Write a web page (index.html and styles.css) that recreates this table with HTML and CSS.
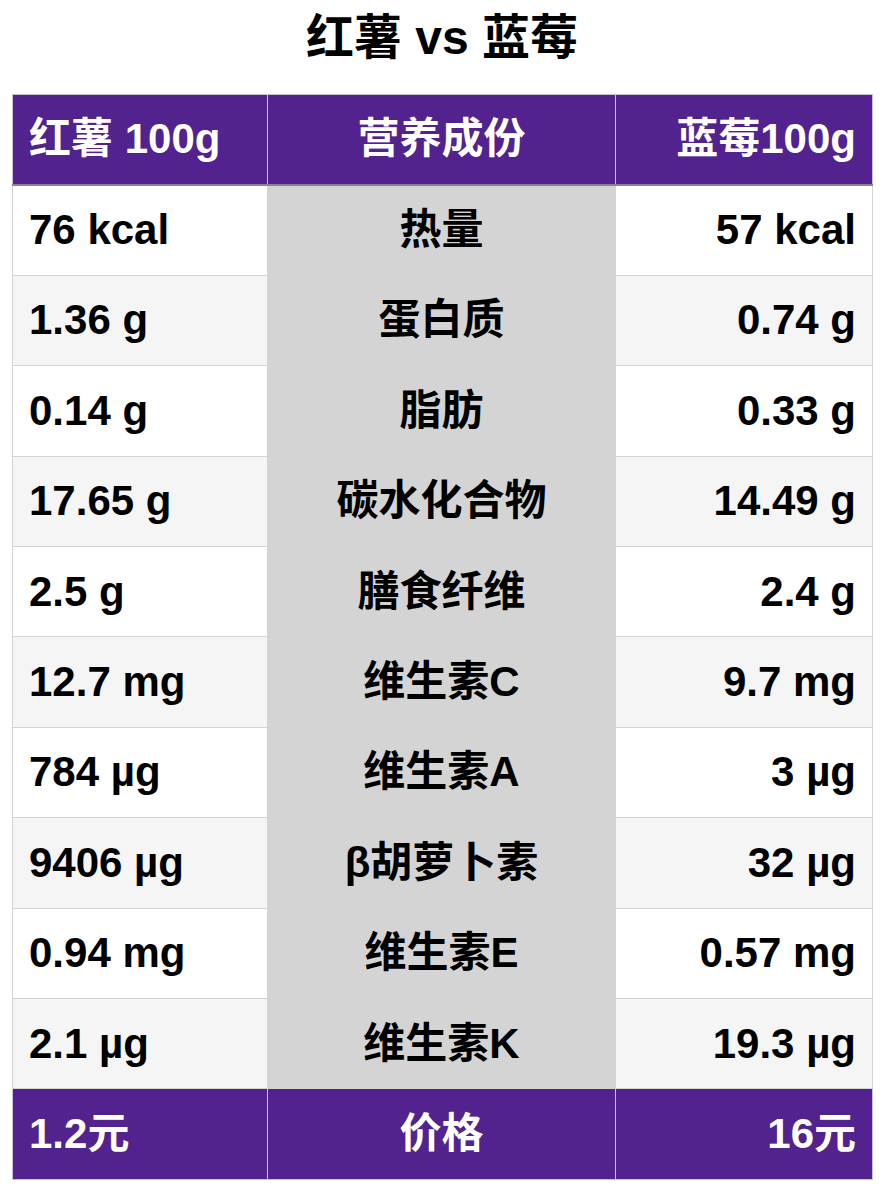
FILE: index.html
```html
<!DOCTYPE html>
<html lang="zh">
<head>
<meta charset="utf-8">
<title>红薯 vs 蓝莓</title>
<link rel="stylesheet" href="styles.css">
</head>
<body>
<h1 class="title">红薯 vs 蓝莓</h1>
<table class="cmp">
  <thead>
    <tr class="head">
      <th class="l">红薯 100g</th>
      <th class="c">营养成份</th>
      <th class="r">蓝莓100g</th>
    </tr>
  </thead>
  <tbody>
    <tr><td class="l">76 kcal</td><td class="c">热量</td><td class="r">57 kcal</td></tr>
    <tr><td class="l">1.36 g</td><td class="c">蛋白质</td><td class="r">0.74 g</td></tr>
    <tr><td class="l">0.14 g</td><td class="c">脂肪</td><td class="r">0.33 g</td></tr>
    <tr><td class="l">17.65 g</td><td class="c">碳水化合物</td><td class="r">14.49 g</td></tr>
    <tr><td class="l">2.5 g</td><td class="c">膳食纤维</td><td class="r">2.4 g</td></tr>
    <tr><td class="l">12.7 mg</td><td class="c">维生素C</td><td class="r">9.7 mg</td></tr>
    <tr><td class="l">784 µg</td><td class="c">维生素A</td><td class="r">3 µg</td></tr>
    <tr><td class="l">9406 µg</td><td class="c">β胡萝卜素</td><td class="r">32 µg</td></tr>
    <tr><td class="l">0.94 mg</td><td class="c">维生素E</td><td class="r">0.57 mg</td></tr>
    <tr><td class="l">2.1 µg</td><td class="c">维生素K</td><td class="r">19.3 µg</td></tr>
  </tbody>
  <tfoot>
    <tr class="foot">
      <td class="l">1.2元</td>
      <td class="c">价格</td>
      <td class="r">16元</td>
    </tr>
  </tfoot>
</table>
</body>
</html>
```
FILE: styles.css
```css
html, body {
  margin: 0;
  padding: 0;
  background: #ffffff;
}
body {
  font-family: "Liberation Sans", "Noto Sans CJK SC", sans-serif;
  font-weight: bold;
  color: #000;
}
.title {
  margin: 0;
  height: 94px;
  padding-top: 9px;
  box-sizing: border-box;
  text-align: center;
  font-size: 48px;
  line-height: 58px;
  font-weight: bold;
}
.cmp {
  margin-left: 12px;
  width: 860px;
  border-collapse: collapse;
  table-layout: fixed;
  font-size: 42px;
}
.cmp th, .cmp td {
  height: 90.4px;
  padding: 0 16px;
  box-sizing: border-box;
  border: 1px solid #d0d0d0;
  font-weight: bold;
  white-space: nowrap;
  line-height: 1;
}
.cmp th.l, .cmp td.l { width: 255px; text-align: left; }
.cmp th.c, .cmp td.c { width: 348px; text-align: center; }
.cmp th.r, .cmp td.r { width: 257px; text-align: right; }

.cmp tr.head th,
.cmp tr.foot td {
  background: #52228f;
  color: #ffffff;
  border-color: #c9bfd8;
}
.cmp tr.head th {
  border-bottom: 2px solid #8b8190;
}
.cmp tbody tr:nth-child(odd) td { background: #ffffff; }
.cmp tbody tr:nth-child(even) td { background: #f5f5f5; }
.cmp tbody tr td.c { background: #d4d4d4; }
.cmp tbody td { border-color: #d3d3d3; }
```
